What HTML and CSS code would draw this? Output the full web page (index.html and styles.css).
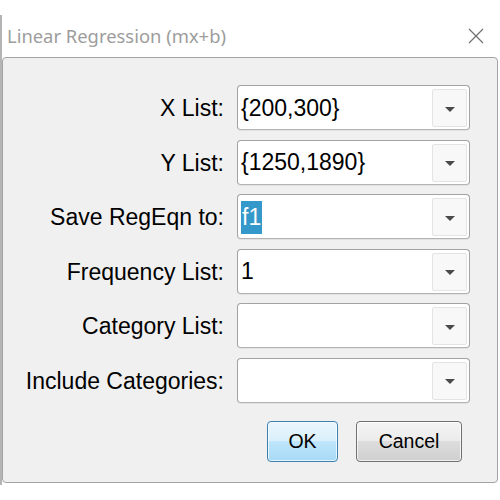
FILE: index.html
```html
<!DOCTYPE html>
<html lang="en">
<head>
    <meta charset="UTF-8">
    <meta name="viewport" content="width=device-width, initial-scale=1.0">
    <title>Linear Regression (mx+b)</title>
    <link rel="stylesheet" href="styles.css">
</head>
<body>
    <div class="window">
        <div class="titlebar">
            <span class="title">Linear Regression (mx+b)</span>
            <svg class="close" width="16" height="16" viewBox="0 0 16 16">
                <path d="M1 1 L15 15 M15 1 L1 15" stroke="#707070" stroke-width="1.2" fill="none"/>
            </svg>
        </div>
        <div class="panel">
            <div class="form">
                <label class="label">X List:</label>
                <div class="combo">
                    <span class="value">{200,300}</span>
                    <span class="drop"><span class="arrow"></span></span>
                </div>
                <label class="label">Y List:</label>
                <div class="combo">
                    <span class="value">{1250,1890}</span>
                    <span class="drop"><span class="arrow"></span></span>
                </div>
                <label class="label">Save RegEqn to:</label>
                <div class="combo">
                    <span class="value"><span class="selected">f1</span></span>
                    <span class="drop"><span class="arrow"></span></span>
                </div>
                <label class="label">Frequency List:</label>
                <div class="combo">
                    <span class="value">1</span>
                    <span class="drop"><span class="arrow"></span></span>
                </div>
                <label class="label">Category List:</label>
                <div class="combo">
                    <span class="value"></span>
                    <span class="drop"><span class="arrow"></span></span>
                </div>
                <label class="label">Include Categories:</label>
                <div class="combo">
                    <span class="value"></span>
                    <span class="drop"><span class="arrow"></span></span>
                </div>
            </div>
            <div class="actions">
                <button class="btn btn-ok">OK</button>
                <button class="btn btn-cancel">Cancel</button>
            </div>
        </div>
    </div>
</body>
</html>
```

FILE: styles.css
```css
* {
    margin: 0;
    padding: 0;
    box-sizing: border-box;
}
body {
    width: 500px;
    height: 500px;
    background: white;
    font-family: 'Liberation Sans', Arial, sans-serif;
    color: black;
    overflow: hidden;
}
.window {
    margin-top: 15px;
    height: 470px;
    border-left: 2px solid #b4b4b4;
}
.titlebar {
    height: 42px;
    display: flex;
    justify-content: space-between;
    align-items: center;
    padding: 0 16px 0 5px;
}
.title {
    font-family: 'Noto Sans', 'Open Sans', sans-serif;
    font-size: 18.4px;
    color: #9d9d9d;
    margin-top: -1px;
}
.close {
    margin-top: -1px;
}
.panel {
    margin-right: 2px;
    height: 426px;
    background: #f0f0f0;
    border: 1px solid #a4a4a4;
    border-radius: 4px;
    padding: 27px 27px 0 0;
}
.form {
    display: grid;
    grid-template-columns: auto 233px;
    justify-content: end;
    column-gap: 13px;
    row-gap: 9.6px;
}
.label {
    font-size: 23px;
    text-align: right;
    align-self: center;
    margin-top: 2px;
}
.combo {
    height: 45px;
    background: white;
    border: 1px solid #a2a2a2;
    border-bottom-color: #b4b4b4;
    border-radius: 4px;
    box-shadow: 0 1px 0 #e2e2e2;
    display: flex;
    align-items: center;
    padding: 3px 2px 2px 3px;
}
.value {
    flex: 1;
    font-size: 23px;
    line-height: 33px;
    white-space: nowrap;
}
.selected {
    display: inline-block;
    background: #3598ca;
    color: white;
    padding: 0 1px;
    line-height: 33px;
}
.drop {
    width: 35px;
    height: 38px;
    align-self: stretch;
    background: #f8f8f8;
    border: 1px solid #e4e4e4;
    border-radius: 2px;
    display: flex;
    align-items: center;
    justify-content: center;
}
.arrow {
    width: 0;
    height: 0;
    border-left: 5px solid transparent;
    border-right: 5px solid transparent;
    border-top: 5px solid #4a4a4a;
    margin-top: 2px;
}
.actions {
    display: flex;
    justify-content: flex-end;
    gap: 18px;
    margin-top: 18px;
    padding-right: 8px;
}
.btn {
    height: 41px;
    font-family: 'Liberation Sans', Arial, sans-serif;
    font-size: 19.5px;
    color: black;
    border-radius: 4px;
    cursor: pointer;
    box-shadow: inset 0 0 0 1px rgba(255, 255, 255, 0.7);
}
.btn-ok {
    width: 71px;
    border: 1px solid #3c7fb1;
    background: linear-gradient(#eaf6fd 0%, #d9f0fc 50%, #bee6fd 50%, #a7d9f5 100%);
}
.btn-cancel {
    width: 106px;
    border: 1px solid #707070;
    background: linear-gradient(#f4f4f4 0%, #ebebeb 50%, #dddddd 50%, #cfcfcf 100%);
}
```
